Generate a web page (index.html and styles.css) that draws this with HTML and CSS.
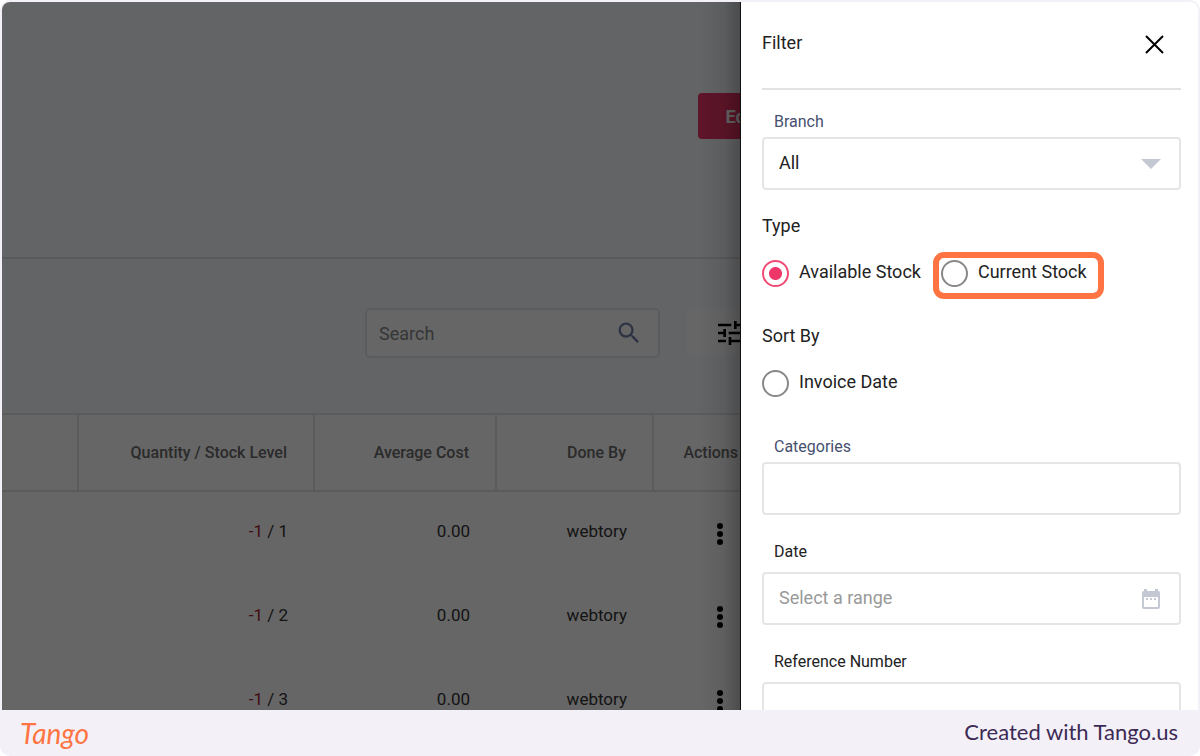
FILE: index.html
```
<!DOCTYPE html>
<html lang="en">
<head>
  <meta charset="UTF-8" />
  <meta name="viewport" content="width=device-width, initial-scale=1" />
  <title>Stock Filter</title>
  <link rel="stylesheet" href="styles.css">
</head>
<body>
  <div class="stage">
    <main class="page">
      <div class="page-header">
        <button type="button" class="edit-btn">Edit</button>
      </div>

      <div class="toolbar">
        <div class="search">
          <input type="text" placeholder="Search" aria-label="Search" />
          <svg width="28" height="28" viewBox="0 0 24 24" fill="#7480a8"><path d="M15.5 14h-.79l-.28-.27A6.47 6.47 0 0 0 16 9.5 6.5 6.5 0 1 0 9.500 16c1.610 0 3.090-.59 4.230-1.570l.27.28v.79l5 4.990L20.490 19l-4.990-5zm-6 0C7.010 14 5 11.990 5 9.500S7.010 5 9.500 5 14 7.010 14 9.500 11.990 14 9.500 14z"/></svg>
        </div>
        <button type="button" class="tune-btn" aria-label="Filters">
          <svg width="32" height="32" viewBox="0 0 24 24"><path d="M3 17v2h6v-2H3zM3 5v2h10V5H3zm10 16v-2h8v-2h-8v-2h-2v6h2zM7 9v2H3v2h4v2h2V9H7zm14 4v-2H11v2h10zm-6-4h2V7h4V5h-4V3h-2v6z"/></svg>
        </button>
      </div>

      <table class="stock">
        <colgroup>
          <col class="col-name"><col class="col-qty"><col class="col-cost"><col class="col-by"><col class="col-actions">
        </colgroup>
        <thead>
          <tr><th></th><th>Quantity / Stock Level</th><th>Average Cost</th><th>Done By</th><th>Actions</th></tr>
        </thead>
        <tbody>
          <tr>
            <td></td><td><span class="negative">-1</span> / 1</td><td>0.00</td><td>webtory</td>
            <td><button type="button" class="more" aria-label="More"><svg width="8" height="24" viewBox="0 0 8 24"><circle cx="4" cy="4" r="3"/><circle cx="4" cy="12" r="3"/><circle cx="4" cy="20" r="3"/></svg></button></td>
          </tr>
          <tr>
            <td></td><td><span class="negative">-1</span> / 2</td><td>0.00</td><td>webtory</td>
            <td><button type="button" class="more" aria-label="More"><svg width="8" height="24" viewBox="0 0 8 24"><circle cx="4" cy="4" r="3"/><circle cx="4" cy="12" r="3"/><circle cx="4" cy="20" r="3"/></svg></button></td>
          </tr>
          <tr>
            <td></td><td><span class="negative">-1</span> / 3</td><td>0.00</td><td>webtory</td>
            <td><button type="button" class="more" aria-label="More"><svg width="8" height="24" viewBox="0 0 8 24"><circle cx="4" cy="4" r="3"/><circle cx="4" cy="12" r="3"/><circle cx="4" cy="20" r="3"/></svg></button></td>
          </tr>
        </tbody>
      </table>
    </main>

    <aside class="drawer">
      <div class="drawer-header">
        <h2>Filter</h2>
        <button type="button" class="close" aria-label="Close">
          <svg width="20" height="20" viewBox="0 0 20 20" fill="none" stroke="#000" stroke-width="2"><path d="M1 2l17 17M18 2L1 19"/></svg>
        </button>
      </div>

      <form>
        <div class="field">
          <label class="muted" for="branch">Branch</label>
          <div class="control">
            <select id="branch"><option>All</option></select>
            <svg class="arrow" width="20" height="10" viewBox="0 0 20 10" fill="#c3c8d2"><path d="M0 0h20L10 10z"/></svg>
          </div>
        </div>

        <fieldset>
          <legend>Type</legend>
          <div class="options">
            <label><input type="radio" name="type" checked /><span>Available Stock</span></label>
            <label class="highlight"><input type="radio" name="type" /><span>Current Stock</span></label>
          </div>
        </fieldset>

        <fieldset>
          <legend>Sort By</legend>
          <div class="options">
            <label><input type="radio" name="sort" /><span>Invoice Date</span></label>
          </div>
        </fieldset>

        <div class="field">
          <label class="muted" for="categories">Categories</label>
          <div class="control"><input type="text" id="categories" /></div>
        </div>

        <div class="field">
          <label for="date">Date</label>
          <div class="control">
            <input type="text" id="date" placeholder="Select a range" />
            <svg class="calendar" width="20" height="22" viewBox="0 0 20 22" fill="#c3c8d2"><path fill-rule="evenodd" d="M3 1h3v2h8V1h3v2h1a2 2 0 0 1 1 2v14a2 2 0 0 1-2 2H3a2 2 0 0 1-2-2V5a2 2 0 0 1 2-2zM3 9v10h14V9z"/><path d="M5 10h2v2H5zM9 10h2v2H9zM13 10h2v2h-2z"/></svg>
          </div>
        </div>

        <div class="field">
          <label for="reference">Reference Number</label>
          <div class="control"><input type="text" id="reference" /></div>
        </div>
      </form>
    </aside>
  </div>

  <footer>
    <a class="logo" href="#">Tango</a>
    <span class="credit">Created with Tango.us</span>
  </footer>
</body>
</html>
```
FILE: styles.css
```
* {
  box-sizing: border-box;
}
html {
  background: #fff;
}
body {
  margin: 0;
  height: 100vh;
  padding: 2px 2px 0;
  display: flex;
  flex-direction: column;
  background: #f3f1f7;
  border-radius: 10px;
  font-family: Roboto, sans-serif;
  font-size: 18px;
  color: #222;
}
button {
  border: 0;
  padding: 0;
  font: inherit;
}
svg {
  display: block;
  flex: none;
}
.stage {
  flex: 1;
  min-height: 0;
  display: flex;
  overflow: hidden;
  border-radius: 8px 8px 0 0;
  background: #fff;
}

/* page behind the drawer */
.page {
  position: relative;
  flex: 1;
  min-width: 0;
  overflow: hidden;
  background: #f5faff;
}
.page::after {
  content: "";
  position: absolute;
  inset: 0;
  background: linear-gradient(to left, rgba(0, 0, 0, 0.25), rgba(0, 0, 0, 0.08) 16px, transparent 40px), rgba(0, 0, 0, 0.6);
  border-right: 1px solid #111;
}
.page-header {
  height: 257px;
  padding-top: 91px;
  display: flex;
  justify-content: flex-end;
  border-bottom: 2px solid #dfe1e4;
}
.edit-btn {
  flex: none;
  width: 86px;
  height: 46px;
  margin-right: -43px;
  border-radius: 4px;
  background: #ee3668;
  color: #fff;
  font-weight: bold;
}
.toolbar {
  height: 154px;
  padding-top: 49px;
  display: flex;
  justify-content: flex-end;
  gap: 27px;
}
.search {
  width: 295px;
  height: 50px;
  padding: 0 15px 0 12px;
  display: flex;
  align-items: center;
  border: 2px solid #e2e6ea;
  border-radius: 5px;
  background: #fff;
}
.search input {
  flex: 1;
  min-width: 0;
  border: 0;
  background: none;
  padding: 0;
  font: inherit;
  font-size: 18px;
}
.search input::placeholder {
  color: #888;
}
.tune-btn {
  width: 86px;
  height: 48px;
  margin-right: -32px;
  padding: 2px 0 0 27px;
  border-radius: 5px;
  background: #fff;
}
.stock {
  width: 763px;
  table-layout: fixed;
  border-collapse: collapse;
  background: #fff;
}
.col-name { width: 76px; }
.col-qty { width: 236px; }
.col-cost { width: 182px; }
.col-by { width: 157px; }
.col-actions { width: 112px; }
.stock th, .stock td {
  padding: 0 26px;
  text-align: right;
}
.stock th {
  height: 77px;
  border: 2px solid #e3e3e3;
  border-left: 0;
  font-size: 16px;
  font-weight: 500;
  color: #6b6b6b;
}
.stock td {
  height: 84px;
  padding-bottom: 5px;
  font-size: 17px;
  color: #333;
}
.negative {
  color: #a3222e;
}
.more {
  margin: 9px 15px 0 0;
  background: none;
}

/* filter drawer */
.drawer {
  width: 457px;
  padding: 0 17px 0 21px;
  overflow: hidden;
  background: #fff;
}
.drawer-header {
  height: 88px;
  padding: 0 16px 6px 0;
  display: flex;
  align-items: center;
  justify-content: space-between;
  border-bottom: 2px solid #e2e2e2;
}
h2 {
  margin: 0;
  font-size: 18px;
  font-weight: normal;
}
.close {
  padding-top: 4px;
  background: none;
}
.field {
  padding-top: 20px;
}
.field > label {
  display: block;
  padding-left: 12px;
  margin-bottom: 8px;
  font-size: 16px;
  line-height: 24px;
}
.field > .muted {
  margin-bottom: 3px;
  color: #47506f;
}
.control {
  height: 53px;
  display: flex;
  align-items: center;
  padding: 0 18px 0 15px;
  border: 2px solid #e5e5e5;
  border-radius: 4px;
}
.control input, .control select {
  flex: 1;
  min-width: 0;
  border: 0;
  padding: 0 0 2px;
  background: none;
  appearance: none;
  font: inherit;
  color: inherit;
}
.control input::placeholder {
  color: #999;
}
fieldset {
  margin: 0;
  padding: 24px 0 0;
  border: 0;
}
fieldset + fieldset {
  padding-top: 37px;
}
legend {
  float: left;
  width: 100%;
  padding: 0;
  line-height: 24px;
}
.options {
  clear: both;
  padding-top: 22px;
  display: flex;
  gap: 20px;
}
.options label {
  position: relative;
  display: flex;
  gap: 10px;
}
.options span {
  line-height: 23px;
}
.options input {
  appearance: none;
  width: 27px;
  height: 27px;
  margin: 0;
  border: 2px solid #888;
  border-radius: 50%;
}
.options input:checked {
  border-color: #f04a76;
  background: radial-gradient(circle, #ee3668 6px, transparent 7px);
}
/* marks the option to click */
.highlight::after {
  content: "";
  position: absolute;
  inset: -8px -17px -12px -8px;
  border: 6px solid #ff7442;
  border-radius: 11px;
}
fieldset + .field {
  padding-top: 38px;
}
.field + .field {
  padding-top: 25px;
}

footer {
  height: 46px;
  padding: 0 20px 0 18px;
  display: flex;
  align-items: center;
  justify-content: space-between;
  font-family: Lato, sans-serif;
}
.logo {
  color: #ff7442;
  font-size: 28px;
  font-style: italic;
  line-height: 46px;
  text-decoration: none;
}
.credit {
  padding-bottom: 3px;
  color: #3d2a55;
  font-size: 22px;
}
```
